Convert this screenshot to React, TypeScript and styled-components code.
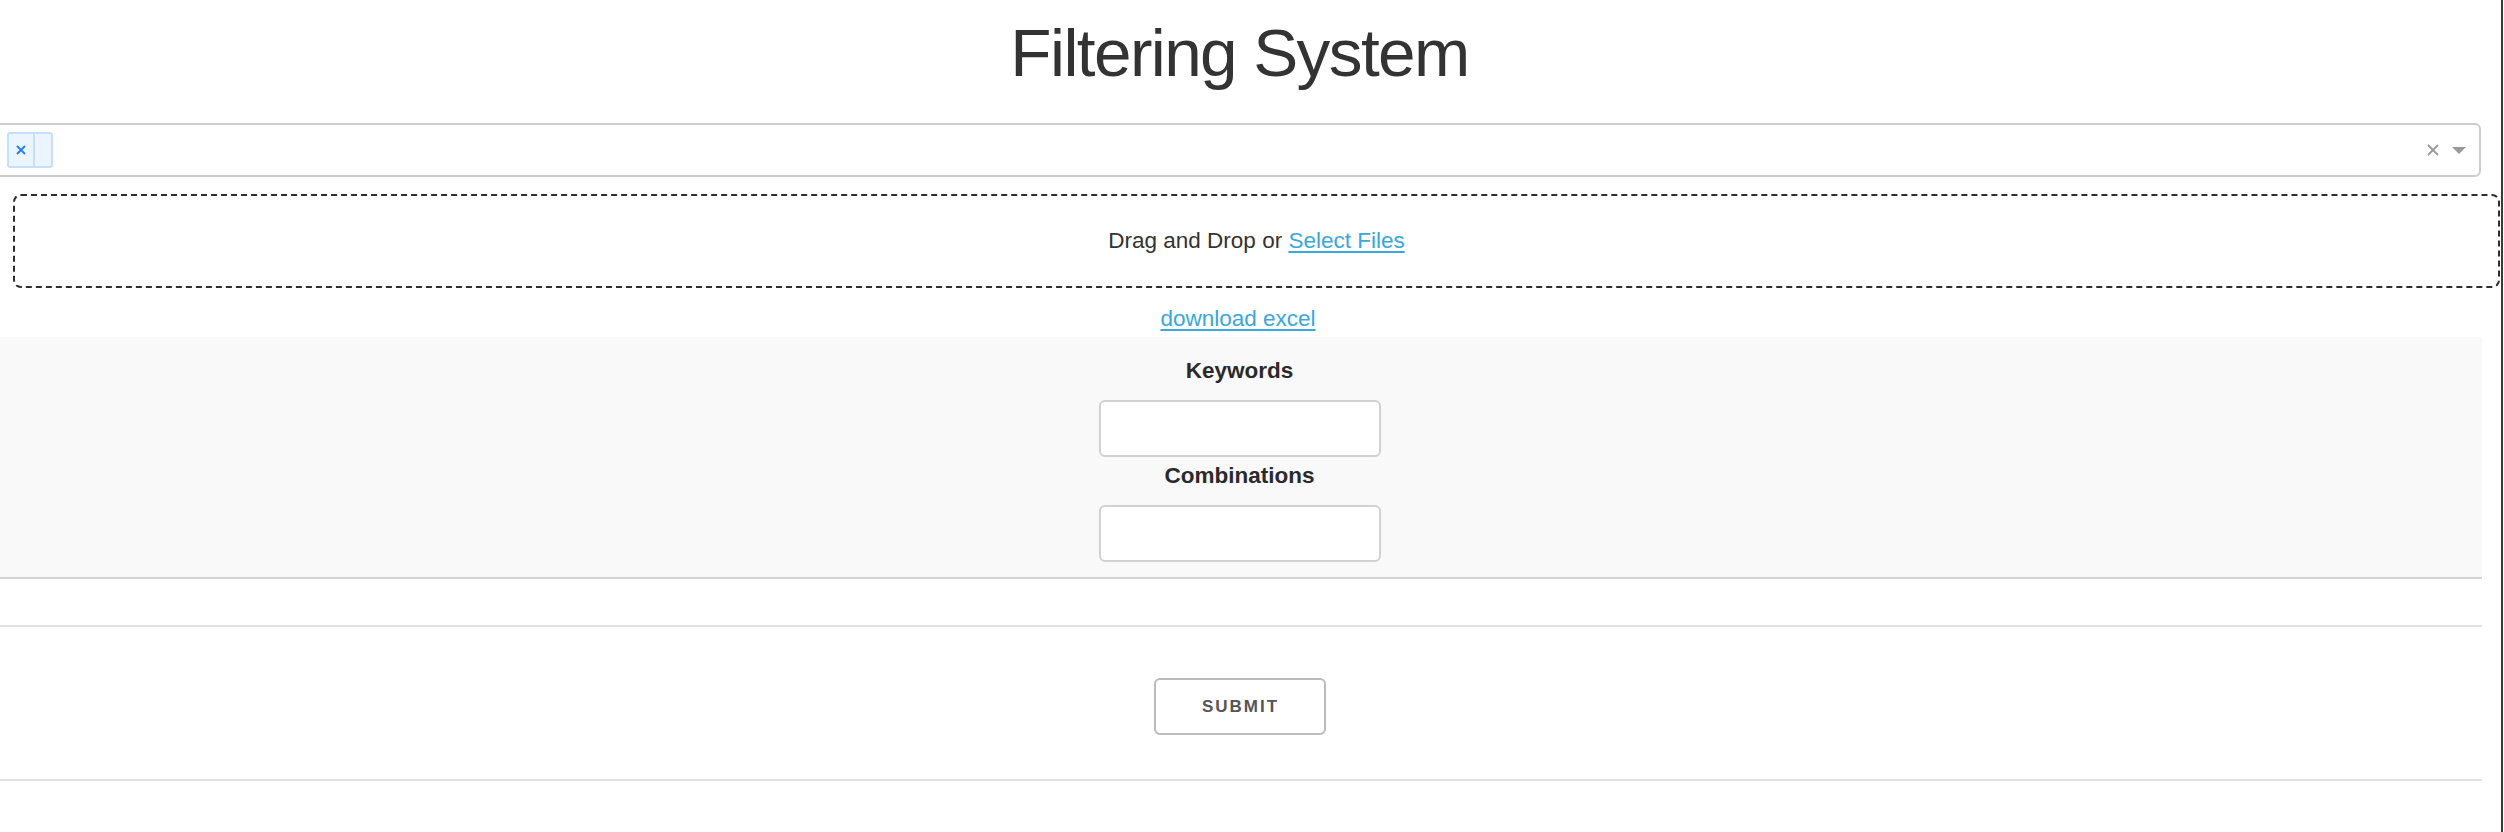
import styled, { createGlobalStyle } from "styled-components";

const GlobalStyle = createGlobalStyle`
  html, body {
    margin: 0;
    padding: 0;
    background: #fff;
  }
  body {
    font-family: "Liberation Sans", Helvetica, Arial, sans-serif;
    color: #222;
    overflow: hidden;
  }
  * {
    box-sizing: border-box;
  }
`;

const Frame = styled.div`
  width: 2503px;
  min-height: 832px;
  border-right: 2px solid #3a3a3a;
`;

const Page = styled.div`
  width: 2482px;
  display: flex;
  flex-direction: column;
`;

const Title = styled.h1`
  margin: 12px 0 30px;
  padding-right: 3px;
  font-size: 67.5px;
  line-height: 81px;
  font-weight: 400;
  letter-spacing: -1.6px;
  color: #333;
  text-align: center;
`;

const Control = styled.div`
  margin-left: -6px;
  width: calc(100% + 5px);
  height: 54px;
  border: 2px solid #ccc;
  border-radius: 6px;
  background: #fff;
  display: flex;
  align-items: center;
  padding: 0 13px 0 11px;
`;

const Values = styled.div`
  flex: 1;
  display: flex;
  align-items: center;
`;

const Tag = styled.div`
  display: flex;
  height: 36px;
  border: 2px solid #c6e0fb;
  border-radius: 3px;
  background: #ebf5ff;
  color: #1a7ff0;
`;

const TagIcon = styled.span`
  width: 26px;
  display: flex;
  align-items: center;
  justify-content: center;
  border-right: 2px solid #c6e0fb;
`;

const TagLabel = styled.span`
  width: 16px;
`;

const Indicators = styled.div`
  display: flex;
  align-items: center;
  gap: 13px;
`;

const Arrow = styled.span`
  width: 0;
  height: 0;
  border-style: solid;
  border-width: 7px 7.5px 0 7.5px;
  border-color: #999 transparent transparent transparent;
`;

const Upload = styled.div`
  margin: 17px 0 0 13px;
  width: 2487px;
  height: 94px;
  border: 2px dashed #2e2e2e;
  border-radius: 8px;
  display: flex;
  align-items: center;
  justify-content: center;
  font-size: 22.5px;
  color: #333;
`;

const Link = styled.a`
  color: #3aa8da;
  text-decoration: underline;
  text-underline-offset: 3px;
  text-decoration-thickness: 2px;
  cursor: pointer;
`;

const DownloadRow = styled.div`
  margin-top: 13px;
  padding-right: 6px;
  text-align: center;
  font-size: 22.5px;
  line-height: 36px;
`;

const Filters = styled.section`
  background: #f9f9f9;
  border-bottom: 2px solid #d3d3d3;
  padding: 16px 0 15px;
  display: flex;
  flex-direction: column;
  align-items: center;
`;

const Label = styled.label<{ $gap: number }>`
  display: block;
  margin-top: ${(p) => p.$gap}px;
  margin-bottom: 11px;
  padding-right: 3px;
  font-size: 22.5px;
  line-height: 36px;
  font-weight: 700;
  color: #2a2a2a;
`;

const TextInput = styled.input`
  width: 282px;
  height: 57px;
  margin-right: 3px;
  border: 2px solid #d1d1d1;
  border-radius: 6px;
  background: #fff;
  font-size: 22px;
  padding: 9px 15px;
  &:focus {
    outline: none;
  }
`;

const Rule = styled.hr<{ $top: number }>`
  margin: ${(p) => p.$top}px 0 0;
  border: 0;
  border-top: 2px solid #e1e1e1;
`;

const SubmitRow = styled.div`
  margin-top: 51px;
  margin-bottom: 44px;
  padding-right: 3px;
  display: flex;
  justify-content: center;
`;

const SubmitButton = styled.button`
  width: 172px;
  height: 57px;
  border: 2px solid #bbb;
  border-radius: 6px;
  background: transparent;
  color: #555;
  font-family: inherit;
  font-size: 17px;
  font-weight: 700;
  letter-spacing: 2px;
  text-transform: uppercase;
  padding: 0 0 0 2px;
  cursor: pointer;
`;

export default function App() {
  return (
    <Frame>
      <GlobalStyle />
      <Page>
        <Title>Filtering System</Title>

        <Control>
          <Values>
            <Tag>
              <TagIcon>
                <svg width="10" height="10" viewBox="0 0 10 10">
                  <path d="M1 1L9 9M9 1L1 9" stroke="#1a7ff0" strokeWidth="1.8" />
                </svg>
              </TagIcon>
              <TagLabel />
            </Tag>
          </Values>
          <Indicators>
            <svg width="12" height="12" viewBox="0 0 12 12">
              <path d="M1 1L11 11M11 1L1 11" stroke="#999" strokeWidth="1.8" />
            </svg>
            <Arrow />
          </Indicators>
        </Control>

        <Upload>
          <span>
            Drag and Drop or <Link>Select Files</Link>
          </span>
        </Upload>

        <DownloadRow>
          <Link>download excel</Link>
        </DownloadRow>

        <Filters>
          <Label $gap={0}>Keywords</Label>
          <TextInput type="text" />
          <Label $gap={1}>Combinations</Label>
          <TextInput type="text" />
        </Filters>

        <Rule $top={46} />
        <SubmitRow>
          <SubmitButton>Submit</SubmitButton>
        </SubmitRow>
        <Rule $top={0} />
      </Page>
    </Frame>
  );
}
